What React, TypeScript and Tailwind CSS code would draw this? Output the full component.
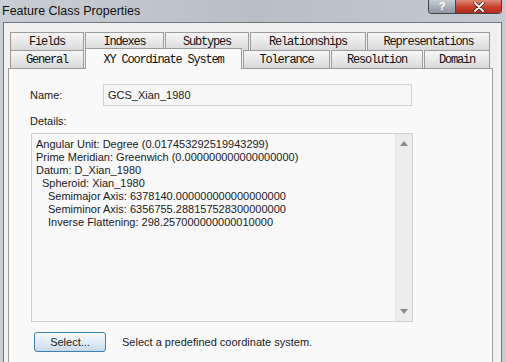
import React from "react";

const backTabs = [
  { label: "Fields", w: "w-[75px]" },
  { label: "Indexes", w: "w-[80px]" },
  { label: "Subtypes", w: "w-[85px]" },
  { label: "Relationships", w: "w-[117px]" },
  { label: "Representations", w: "w-[124px]" },
];

const frontTabs = [
  { label: "General", w: "w-[75px]", active: false },
  { label: "XY Coordinate System", w: "w-[158px]", active: true },
  { label: "Tolerance", w: "w-[88px]", active: false },
  { label: "Resolution", w: "w-[93px]", active: false },
  { label: "Domain", w: "w-[67px]", active: false },
];

const details = [
  { text: "Angular Unit: Degree (0.017453292519943299)", indent: "pl-0" },
  { text: "Prime Meridian: Greenwich (0.000000000000000000)", indent: "pl-0" },
  { text: "Datum: D_Xian_1980", indent: "pl-0" },
  { text: "Spheroid: Xian_1980", indent: "pl-[6px]" },
  { text: "Semimajor Axis: 6378140.000000000000000000", indent: "pl-[12px]" },
  { text: "Semiminor Axis: 6356755.288157528300000000", indent: "pl-[12px]" },
  { text: "Inverse Flattening: 298.257000000000010000", indent: "pl-[12px]" },
];

function Tab({ label, w }: { label: string; w: string }) {
  return (
    <div className={`${w} h-[18px] pl-[1px]`}>
      <div className="h-full border border-[#9c9c9c] border-b-0 bg-gradient-to-b from-[#f6f6f6] via-[#e9e9e9] to-[#d9d9d9] flex items-center justify-center pt-[1px] font-['Liberation_Mono',monospace] text-[12px] tracking-[-1.2px] text-[#111]">
        {label}
      </div>
    </div>
  );
}

export default function App() {
  return (
    <div className="w-[506px] h-[362px] overflow-hidden flex flex-col bg-gradient-to-r from-[#c9ced3] via-[#b7bec5] to-[#c4cacf] font-['Liberation_Sans',Arial,sans-serif]">
      {/* Title bar */}
      <div className="h-[22px] flex items-start justify-between shrink-0">
        <div className="pl-[2px] pt-[2px] text-[12.5px] text-[#111]">Feature Class Properties</div>
        <div className="flex mr-[4px] h-[14px] border border-t-0 border-[#3f4449] rounded-b-[4px] overflow-hidden">
          <div className="w-[27px] flex items-center justify-center bg-gradient-to-b from-[#c5ccd3] to-[#8d98a3] border-r border-[#3f4449] text-white text-[11px] font-bold leading-none">
            ?
          </div>
          <div className="w-[45px] flex items-center justify-center bg-gradient-to-b from-[#e08a7a] via-[#c94330] to-[#b52a17]">
            <svg width="12" height="10" viewBox="0 0 12 10">
              <path d="M2 1 L10 9 M10 1 L2 9" stroke="#3a0d05" strokeWidth="3.2" strokeLinecap="round" />
              <path d="M2 1 L10 9 M10 1 L2 9" stroke="#ffffff" strokeWidth="2" strokeLinecap="round" />
            </svg>
          </div>
        </div>
      </div>

      {/* Client area */}
      <div className="flex-1 ml-[3px] mr-[4px] border border-b-0 border-[#6f757a] bg-[#f0f0f0] pt-[9px] pl-[4px]">
        <div className="w-[485px] flex flex-col">
          {/* back tab row */}
          <div className="flex ml-[1px]">
            {backTabs.map((t) => (
              <Tab key={t.label} label={t.label} w={t.w} />
            ))}
          </div>
          {/* front tab row */}
          <div className="flex ml-[1px] h-[18px] items-start">
            {frontTabs.map((t) =>
              t.active ? (
                <div key={t.label} className={`${t.w} h-[21px] -mt-[2px] pl-[1px] relative z-10`}>
                  <div className="h-full border border-[#9c9c9c] border-b-0 bg-[#f9f9f9] flex justify-center pt-[2px] font-['Liberation_Mono',monospace] text-[12px] tracking-[-1.2px] text-[#111]">
                    {t.label}
                  </div>
                </div>
              ) : (
                <div key={t.label} className="border-b border-[#9c9c9c]">
                  <Tab label={t.label} w={t.w} />
                </div>
              )
            )}
          </div>

          {/* tab page */}
          <div className="h-[300px] border border-[#9c9c9c] bg-[#f9f9f9] text-[11px] text-[#1a1a1a] pl-[21px]">
            <div className="flex items-center mt-[15px]">
              <div className="w-[73px]">Name:</div>
              <div className="w-[309px] h-[22px] border border-[#d2d2d2] bg-[#f7f7f7] flex items-center pl-[4px]">
                GCS_Xian_1980
              </div>
            </div>

            <div className="mt-[8px] leading-[14px]">Details:</div>

            <div className="mt-[5px] ml-[1px] w-[382px] h-[189px] border border-[#cfcfcf] bg-[#f8f8f8] flex">
              <div className="flex-1 pl-[4px] pt-[4px] leading-[13px]">
                {details.map((d) => (
                  <div key={d.text} className={d.indent}>
                    {d.text}
                  </div>
                ))}
              </div>
              <div className="w-[17px] border-l border-[#e4e4e4] bg-[#ececec] flex flex-col items-center justify-between py-[7px]">
                <svg width="8" height="5" viewBox="0 0 8 5">
                  <path d="M0 5 L4 0 L8 5 Z" fill="#8a8a8a" />
                </svg>
                <svg width="8" height="5" viewBox="0 0 8 5">
                  <path d="M0 0 L8 0 L4 5 Z" fill="#8a8a8a" />
                </svg>
              </div>
            </div>

            <div className="flex items-center mt-[10px] ml-[4px]">
              <div className="w-[72px] h-[20px] rounded-[3px] border border-[#3c7fb1] bg-gradient-to-b from-[#f3f8fb] via-[#e2edf5] to-[#c7d9e7] flex items-center justify-center">
                Select...
              </div>
              <div className="ml-[16px]">Select a predefined coordinate system.</div>
            </div>
          </div>
        </div>
      </div>
    </div>
  );
}
